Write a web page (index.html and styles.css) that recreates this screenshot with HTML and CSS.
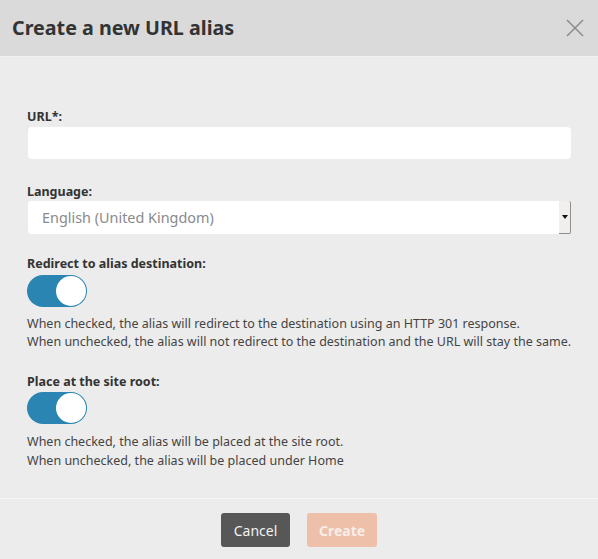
FILE: index.html
```html
<!DOCTYPE html>
<html>
<head>
<meta charset="utf-8">
<link rel="stylesheet" href="styles.css">
</head>
<body>
<div class="dialog">
  <div class="header">
    <h1 class="title">Create a new URL alias</h1>
    <button class="close" aria-label="Close">
      <svg width="18" height="18" viewBox="0 0 18 18"><path d="M1 1L17 17M17 1L1 17" stroke="#8a8a8a" stroke-width="1.5" fill="none"/></svg>
    </button>
  </div>
  <div class="body">
    <div class="field field-url">
      <label class="label">URL*:</label>
      <div class="input"></div>
    </div>
    <div class="field field-lang">
      <label class="label label-tight">Language:</label>
      <div class="select">
        <span class="select-text">English (United Kingdom)</span>
        <span class="select-btn"><span class="arrow"></span></span>
      </div>
    </div>
    <div class="field field-redirect">
      <label class="label label-toggle">Redirect to alias destination:</label>
      <div class="toggle"><span class="knob"></span></div>
      <p class="help">When checked, the alias will redirect to the destination using an HTTP 301 response.<br>When unchecked, the alias will not redirect to the destination and the URL will stay the same.</p>
    </div>
    <div class="field field-root">
      <label class="label">Place at the site root:</label>
      <div class="toggle"><span class="knob"></span></div>
      <p class="help help-loose">When checked, the alias will be placed at the site root.<br>When unchecked, the alias will be placed under Home</p>
    </div>
  </div>
  <div class="footer">
    <button class="btn btn-cancel">Cancel</button>
    <button class="btn btn-create">Create</button>
  </div>
</div>
</body>
</html>
```
FILE: styles.css
```css
* { box-sizing: border-box; }
html, body { margin: 0; padding: 0; }
body {
  font-family: "Noto Sans", "Open Sans", sans-serif;
  background: #ececec;
  color: #333;
  width: 598px;
  height: 559px;
  overflow: hidden;
}
.dialog { display: flex; flex-direction: column; height: 559px; }
.header {
  flex-shrink: 0;
  height: 57px;
  background: #dadada;
  border-bottom: 1px solid #f2f2f2;
  display: flex;
  align-items: center;
  justify-content: space-between;
  padding: 0 14px 0 12px;
}
.title {
  margin: 0;
  font-size: 19.7px;
  font-weight: 700;
  color: #333;
  padding-bottom: 1px;
}
.close {
  border: 0;
  background: none;
  padding: 0;
  width: 18px;
  height: 18px;
  display: block;
}
.close svg { display: block; }
.body {
  flex: 1;
  padding: 51px 27px 0 27px;
}
.field { margin: 0; }
.field-url { margin-bottom: 24px; }
.field-lang { margin-bottom: 21px; }
.field-redirect { margin-bottom: 22px; }
.label {
  display: block;
  font-size: 12.5px;
  font-weight: 700;
  color: #333;
  line-height: 18px;
  margin-bottom: 1px;
}
.label-tight { margin-bottom: 0; }
.label-toggle { margin-bottom: 2px; }
.input {
  height: 32px;
  margin-left: 1px;
  width: 543px;
  background: #fff;
  border-radius: 4px;
}
.select {
  height: 33px;
  margin-left: 1px;
  width: 543px;
  background: #fff;
  border-radius: 3px 0 0 3px;
  display: flex;
  align-items: center;
  justify-content: space-between;
}
.select-text {
  padding-left: 14px;
  font-size: 14.4px;
  color: #8a8a8a;
}
.select-btn {
  width: 12px;
  height: 100%;
  background: #f0efed;
  border-right: 1px solid #8f8f8f;
  border-bottom: 1px solid #8f8f8f;
  border-radius: 0 2px 2px 0;
  display: flex;
  align-items: center;
  justify-content: center;
}
.arrow {
  width: 0; height: 0;
  border-left: 3px solid transparent;
  border-right: 3px solid transparent;
  border-top: 4px solid #111;
}
.toggle {
  width: 60px;
  height: 32px;
  border-radius: 16px;
  background: #2b85b3;
  position: relative;
}
.knob {
  position: absolute;
  right: 1px;
  top: 1px;
  width: 30px;
  height: 30px;
  border-radius: 50%;
  background: #fff;
}
.help {
  margin: 8px 0 0 0;
  font-size: 12.5px;
  line-height: 18px;
  color: #444;
  white-space: nowrap;
}
.help-loose { line-height: 19px; }
.footer {
  flex-shrink: 0;
  height: 61px;
  border-top: 1px solid #f6f6f6;
  display: flex;
  justify-content: center;
  align-items: flex-start;
  gap: 17px;
  padding-top: 14px;
}
.btn {
  border: 0;
  height: 34px;
  border-radius: 3px;
  font-family: "Noto Sans", "Open Sans", sans-serif;
  font-size: 14px;
  padding: 0 11px;
}
.btn-cancel {
  background: #575757;
  color: #f2f2f2;
  width: 69px;
}
.btn-create {
  background: #efc0a9;
  color: #f7eee9;
  font-weight: 700;
  width: 70px;
}
```
